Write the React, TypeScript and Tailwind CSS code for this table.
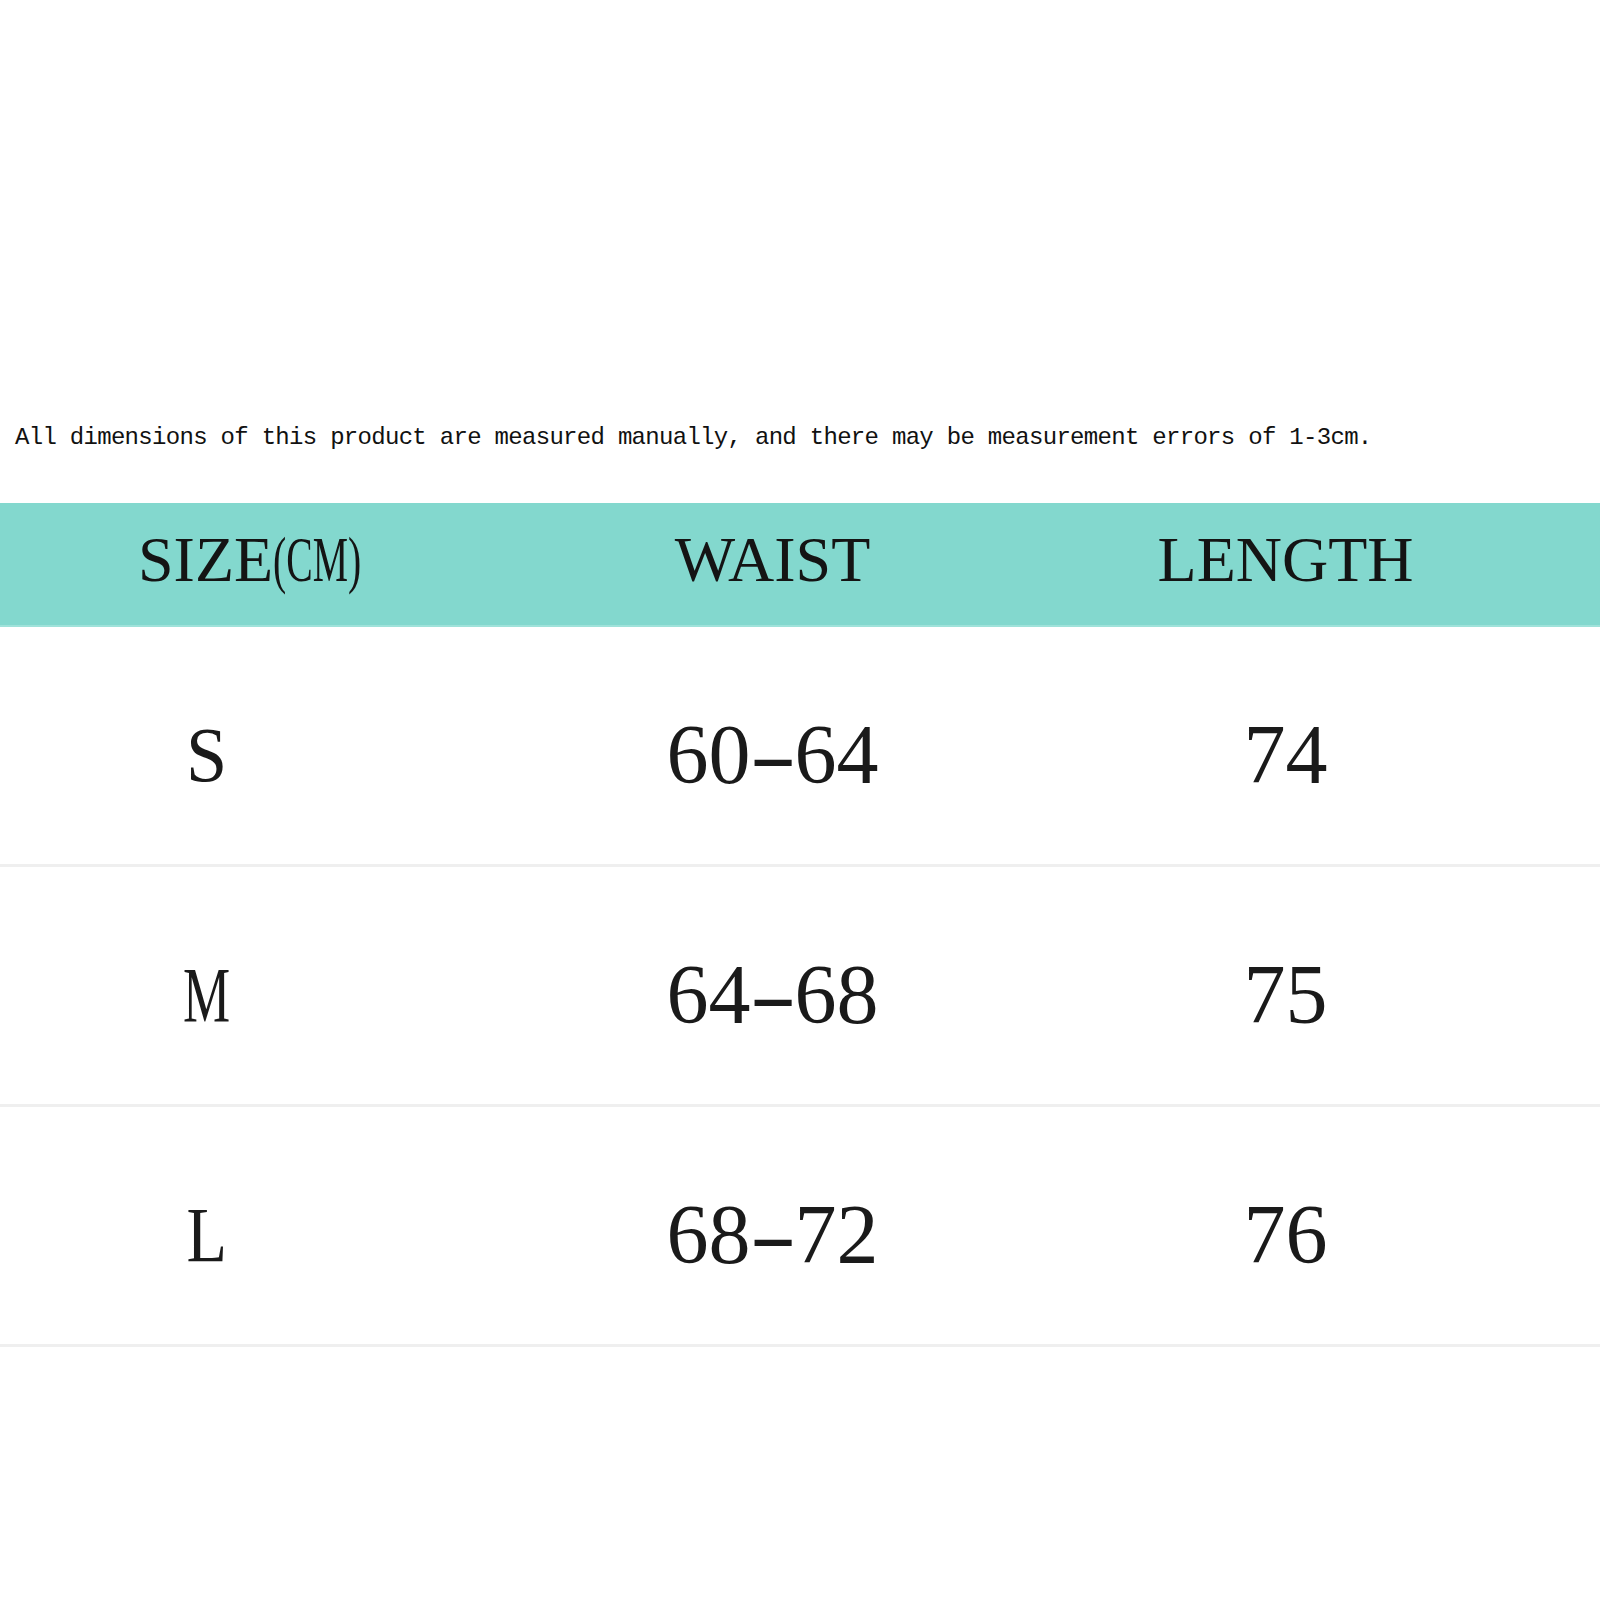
import React from 'react';

type Row = { size: string; waist: [string, string]; length: string; sizeScale: string };

const rows: Row[] = [
  { size: 'S', waist: ['60', '64'], length: '74', sizeScale: 'scale-x-[0.95]' },
  { size: 'M', waist: ['64', '68'], length: '75', sizeScale: 'scale-x-[0.68]' },
  { size: 'L', waist: ['68', '72'], length: '76', sizeScale: 'scale-x-[0.85]' },
];

const serif = "font-['Liberation_Serif',_'Times_New_Roman',_serif]";

/**
 * Size chart: measurement note, teal header band and three rows.
 */
const App: React.FC = () => {
  return (
    <div className="w-[1600px] h-[1600px] bg-white text-[#111]">
      {/* Note line */}
      <p className="pt-[426px] pl-[15px] text-[24px] leading-[24px] tracking-[-0.7px] font-['Liberation_Mono',_'Courier_New',_monospace] text-[#111] whitespace-nowrap">
        All dimensions of this product are measured manually, and there may be measurement errors of 1-3cm.
      </p>

      {/* Table */}
      <div className={`mt-[53px] ${serif}`}>
        {/* Header band */}
        <div className="grid grid-cols-[516px_513px_513px] h-[124px] bg-[#83d8ce] border-b-2 border-[#9fe2da] text-[64px] leading-none text-[#141414]">
          <div className="flex items-center pl-[138px] pb-[8px]">
            <span>SIZE</span>
            <span className="inline-block w-[92px] origin-left scale-x-[0.62]">(CM)</span>
          </div>
          <div className="flex items-center justify-center pb-[8px]">WAIST</div>
          <div className="flex items-center justify-center pb-[8px]">LENGTH</div>
        </div>

        {/* Data rows */}
        {rows.map((row) => (
          <div
            key={row.size}
            className="grid grid-cols-[516px_513px_513px] h-[240px] border-b-[3px] border-[#efefef] text-[84px] leading-none text-[#1a1a1a]"
          >
            <div className="flex items-center justify-center pr-[102px] pt-[18px]">
              <span className={`inline-block text-[78px] ${row.sizeScale}`}>{row.size}</span>
            </div>
            <div className="flex items-center justify-center pt-[18px]">
              <span>{row.waist[0]}</span>
              <span className="inline-block w-[44px] text-center scale-x-[1.7]">-</span>
              <span>{row.waist[1]}</span>
            </div>
            <div className="flex items-center justify-center pt-[18px]">{row.length}</div>
          </div>
        ))}
      </div>
    </div>
  );
};

export default App;
